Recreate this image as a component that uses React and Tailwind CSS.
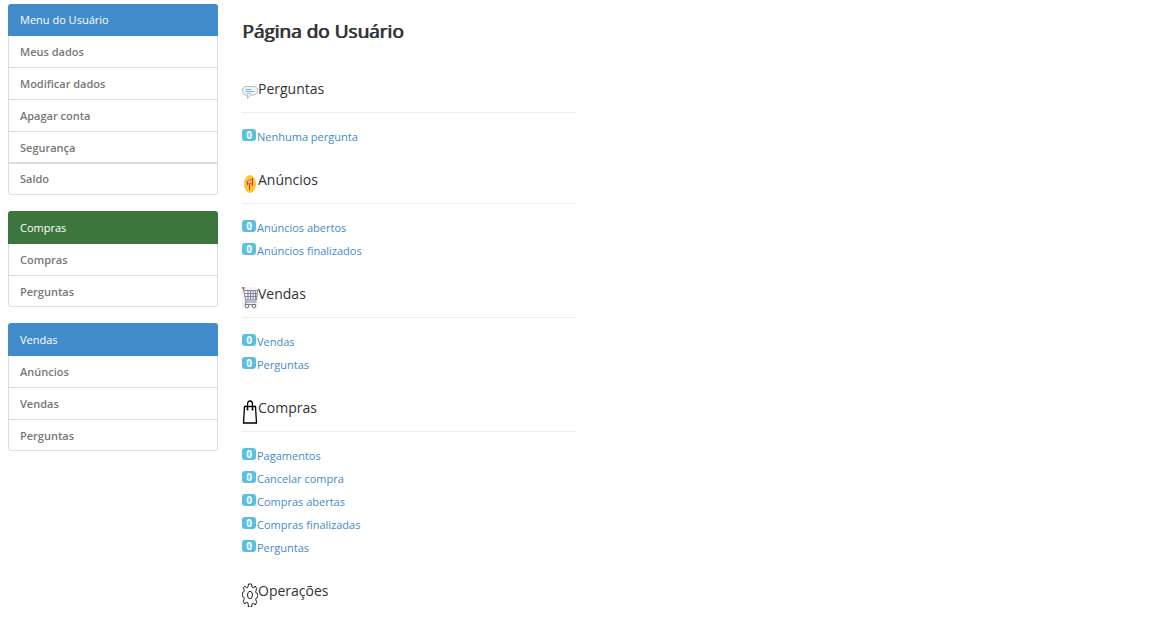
import React from "react";

const menus = [
  {
    title: "Menu do Usuário",
    header: "h-8 bg-[#428bca]",
    groups: [["Meus dados", "Modificar dados", "Apagar conta", "Segurança"], ["Saldo"]],
  },
  { title: "Compras", header: "h-[33px] bg-[#3c763d]", groups: [["Compras", "Perguntas"]] },
  { title: "Vendas", header: "h-[33px] bg-[#428bca]", groups: [["Anúncios", "Vendas", "Perguntas"]] },
];

function Menu({ title, header, groups }) {
  return (
    <section>
      <h2 className={`flex items-center rounded-t-[3px] px-3 text-white ${header}`}>{title}</h2>
      {groups.map((items, g) => (
        <ul
          key={g}
          className={`border-x border-[#ddd] ${
            g > 0 ? "border-t" : ""
          } ${g === groups.length - 1 ? "rounded-b-[3px]" : ""}`}
        >
          {items.map((item, i) => (
            <li key={item}>
              <a
                href="#"
                className={`flex items-start border-b border-[#ddd] px-[11px] font-semibold text-[#777] ${
                  i === items.length - 1 ? "h-[31px]" : "h-8"
                } ${g > 0 ? "pt-[7px]" : "pt-2"} ${
                  g === groups.length - 1 && i === items.length - 1 ? "rounded-b-[3px]" : ""
                }`}
              >
                {item}
              </a>
            </li>
          ))}
        </ul>
      ))}
    </section>
  );
}

function SpeechIcon() {
  return (
    <svg aria-hidden="true" className="mt-2 h-4 w-4 shrink-0" viewBox="0 0 16 16">
      <path
        d="M4.500 1.500h7c2.500 0 4 1.500 4 4s-1.500 4.500-4 4.500H8.500L5.500 13.500V10h-1C2 10 .5 8.500.5 5.700S2 1.500 4.500 1.500Z"
        fill="#f3f6f9"
        stroke="#b7b9bd"
      />
      <path d="M3.500 4.500h6M3.500 6.500h9" stroke="#6db4f2" />
      <path d="M4.500 8.500h5" stroke="#a9d3f8" />
    </svg>
  );
}

function AdIcon() {
  return (
    <svg aria-hidden="true" className="mt-1 h-6 w-4 shrink-0" viewBox="0 0 16 24">
      <ellipse cx="8" cy="12" rx="6" ry="9" fill="#ffc52f" />
      <path d="M5 9.500 10.500 7v4L5 11.500Z" fill="#f8c0b8" stroke="#e3524a" />
      <path d="M10.500 6v8M5.500 10v3M7.500 12v6" stroke="#cf3940" fill="none" />
    </svg>
  );
}

function CartIcon() {
  return (
    <svg aria-hidden="true" className="mt-1 h-6 w-4 shrink-0" viewBox="0 0 16 24">
      <path d="M0 1h16v22H0Z" fill="#f5f5f5" />
      <path
        d="M1.500 3 4 16h10.500M2 4.500h13.500L14.500 14H4M3 7.500h12M3 10.500h12M6 4.500V14M8.500 4.500V14M11 4.500V14M13.500 4.500V14M4 16l-1 2.500h11"
        stroke="#8082a0"
        fill="none"
      />
      <path d="M0 2h2.500" stroke="#e45b55" strokeWidth="2" />
      <circle cx="5" cy="20" r="1.800" fill="#fff" stroke="#70707c" />
      <circle cx="12" cy="20" r="1.800" fill="#fff" stroke="#70707c" />
    </svg>
  );
}

function BagIcon() {
  return (
    <svg aria-hidden="true" className="mt-1 h-6 w-4 shrink-0" viewBox="0 0 16 24" fill="none" stroke="#000">
      <path d="M2.500 6.500h11l1 16.500h-13Z" strokeWidth="1.300" />
      <path d="M5.500 10V4c0-4 5-4 5 0v6M4.500 9.500h2M9.500 9.500h2" strokeWidth="1.300" />
    </svg>
  );
}

function GearIcon() {
  return (
    <svg aria-hidden="true" className="mt-1 h-6 w-4 shrink-0" viewBox="0 0 16 24" fill="none" stroke="#222">
      <path
        d="M6.500 1h3l.5 3 1.500 1 1.700-2 1.500 2.500-1 3 .5 1.500 1.500.5v4l-1.500.5-.5 1.500 1 3-1.500 2.500-1.700-2-1.500 1-.5 3h-3L6 20l-1.500-1-1.700 2-1.500-2.500 1-3-.5-1.500-1.500-.5v-4l1.500-.5.5-1.500-1-3L2.800 3l1.700 2L6 4Z"
        strokeLinejoin="round"
      />
      <ellipse cx="8" cy="12" rx="2.500" ry="3.700" />
    </svg>
  );
}

const sections = [
  { title: "Perguntas", Icon: SpeechIcon, links: ["Nenhuma pergunta"] },
  { title: "Anúncios", Icon: AdIcon, links: ["Anúncios abertos", "Anúncios finalizados"] },
  { title: "Vendas", Icon: CartIcon, links: ["Vendas", "Perguntas"] },
  {
    title: "Compras",
    Icon: BagIcon,
    links: ["Pagamentos", "Cancelar compra", "Compras abertas", "Compras finalizadas", "Perguntas"],
  },
  { title: "Operações", Icon: GearIcon, links: [] },
];

function Section({ title, Icon, links }) {
  return (
    <section>
      <div className={`flex h-9 items-start ${links.length ? "border-b border-[#eee]" : ""}`}>
        <Icon />
        <h2 className="text-sm leading-6 text-[#333]">{title}</h2>
      </div>
      {links.length > 0 && (
        <ul className="mt-3">
          {links.map((link) => (
            <li key={link}>
              <a href="#" className="flex h-[23px] items-start text-[#428bca]">
                <span className="mt-1 h-3 w-[14px] shrink-0 rounded-[3px] bg-[#5bc0de] text-center text-[10px] leading-3 font-bold text-white">
                  0
                </span>
                <span className="ml-px leading-[23px]">{link}</span>
              </a>
            </li>
          ))}
        </ul>
      )}
    </section>
  );
}

export default function App() {
  return (
    <div className="flex min-h-screen items-start gap-6 bg-white px-2 pt-1 font-['Open_Sans',sans-serif] text-[11px] leading-4">
      <nav aria-label="Menu" className="flex w-[210px] shrink-0 flex-col gap-4">
        {menus.map((menu) => (
          <Menu key={menu.title} {...menu} />
        ))}
      </nav>
      <main className="max-w-[335px] grow pt-3">
        <h1 className="text-[19px] leading-[30px] text-[#333] [text-shadow:1px_0_0_currentColor]">Página do Usuário</h1>
        <div className="mt-[31px] flex flex-col gap-5">
          {sections.map((section) => (
            <Section key={section.title} {...section} />
          ))}
        </div>
      </main>
    </div>
  );
}
